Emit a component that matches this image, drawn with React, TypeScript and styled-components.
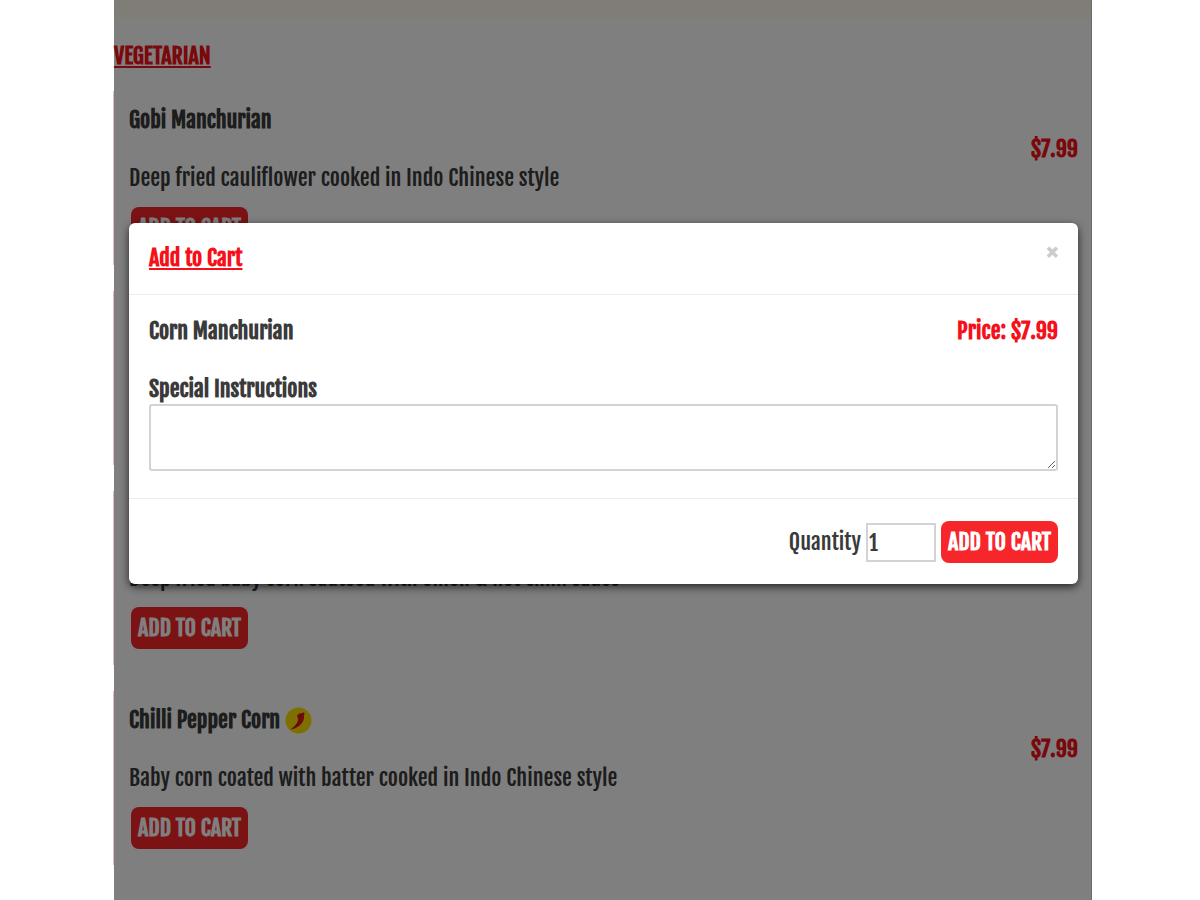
import React from "react";
import styled, { createGlobalStyle, css } from "styled-components";

const display = `"Fjalla One", "Roboto Condensed", "Liberation Sans Narrow", "Open Sans Condensed", "Liberation Sans", sans-serif`;

const GlobalStyle = createGlobalStyle`
  * { box-sizing: border-box; }
  body {
    margin: 0;
    background: #fff;
    color: #3a3a3a;
    font-family: ${display};
    font-size: 22px;
    line-height: 32px;
  }
  h2, h3, p { margin: 0; }
`;

const underlined = css`
  font-size: 22px;
  text-decoration: underline;
  text-decoration-thickness: 2px;
  text-underline-offset: 2px;
`;

const Page = styled.div`
  display: flex;
  padding: 0 108px 0 114px;
  min-height: 100vh;
`;

const Frame = styled.div`
  position: relative;
  flex: 1;
  background: linear-gradient(#fffbeb 0, #fffbeb 12px, #ffffff 24px);
  border-right: 1px solid #6c6c6c;
`;

const Menu = styled.main`
  padding-top: 40px;
`;

const Category = styled.h2`
  ${underlined}
  color: #f5101a;
  margin-bottom: 19px;
`;

const Item = styled.article`
  display: flex;
  justify-content: space-between;
  height: 174px;
  margin: 0 0 26px -1px;
  padding: 0 13px 0 15px;
  border-left: 1px solid #dcc0c3;
`;

const ItemBody = styled.div`
  display: flex;
  flex-direction: column;
  align-items: flex-start;
`;

const ItemName = styled.h3<{ $covered?: boolean }>`
  display: flex;
  align-items: center;
  gap: 5px;
  height: 58px;
  font-size: 22px;
  visibility: ${(p) => (p.$covered ? "hidden" : "visible")};
`;

const Description = styled.p`
  height: 58px;
  padding-top: 13px;
`;

const Price = styled.strong`
  color: #f5101a;
  font-kerning: none;
`;

const ItemPrice = styled(Price)<{ $covered?: boolean }>`
  padding-top: 42px;
  visibility: ${(p) => (p.$covered ? "hidden" : "visible")};
`;

const CartButton = styled.button`
  height: 42px;
  padding: 0 7px;
  border: 0;
  border-radius: 8px;
  background: #f7262b;
  color: #fff;
  font: bold 22px/40px ${display};
  text-transform: uppercase;
`;

const ListCartButton = styled(CartButton)`
  margin-left: 2px;
`;

const Backdrop = styled.div`
  position: absolute;
  inset: 0;
  background: rgba(0, 0, 0, 0.5);
`;

const Dialog = styled.section`
  position: absolute;
  top: 223px;
  left: 15px;
  right: 13px;
  background: #fff;
  border-radius: 6px;
  box-shadow: 0 3px 8px rgba(0, 0, 0, 0.7);
`;

const DialogHeader = styled.header`
  display: flex;
  justify-content: space-between;
  align-items: flex-start;
  height: 72px;
  padding: 19px 20px;
  border-bottom: 1px solid #ececec;
`;

const DialogTitle = styled.h2`
  ${underlined}
  color: #f5101a;
`;

const CloseButton = styled.button`
  padding: 0;
  border: 0;
  background: none;
  color: #ccc;
  font: bold 28px/22px ${display};
`;

const DialogBody = styled.div`
  padding: 20px 20px 27px;
  border-bottom: 1px solid #ececec;
`;

const Summary = styled.div`
  display: flex;
  justify-content: space-between;
  margin-bottom: 26px;
`;

const Field = styled.label`
  display: block;
  height: 31px;
  font-weight: bold;
`;

const Instructions = styled.textarea`
  display: block;
  width: 100%;
  height: 67px;
  border: 2px solid #d3d3d3;
  border-radius: 3px;
  background: #fff;
  font: 22px/32px ${display};
`;

const DialogFooter = styled.footer`
  display: flex;
  justify-content: flex-end;
  align-items: center;
  gap: 5px;
  padding: 22px 20px 21px;
`;

const Quantity = styled.label`
  display: flex;
  align-items: center;
  gap: 5px;
`;

const QuantityInput = styled.input`
  width: 70px;
  height: 39px;
  padding: 0 1px;
  border: 2px solid #d3d3d3;
  color: #3a3a3a;
  font: 22px/32px ${display};
`;

const Chilli = () => (
  <svg width="27" height="27" viewBox="0 0 28 28" role="img" aria-label="Spicy">
    <circle cx="14" cy="14" r="13.5" fill="#ffdc00" />
    <path d="M12.5 9.500C13 7 15.500 6 17.500 6.500L19.500 5.500L20.500 7L19.500 8.500C20.500 12 18.500 16 15.500 18.800C12.800 21.300 9.500 22.800 6 23C9.500 20.500 12.500 17.500 13.500 14C14 12 13 11 12.500 9.500Z" fill="#d8141c" />
  </svg>
);

type Dish = { name: string; text?: string; spicy?: boolean; covered?: boolean };

const dishes: Dish[] = [
  { name: "Gobi Manchurian", text: "Deep fried cauliflower cooked in Indo Chinese style" },
  { name: "Corn Manchurian", covered: true },
  { name: "Baby Corn", text: "Deep fried baby corn sauteed with onion & hot chilli sauce", covered: true },
  { name: "Chilli Pepper Corn", text: "Baby corn coated with batter cooked in Indo Chinese style", spicy: true },
];

export default function App() {
  return (
    <>
      <GlobalStyle />
      <Page>
        <Frame>
          <Menu>
            <Category>VEGETARIAN</Category>
            {dishes.map((d) => (
              <Item key={d.name}>
                <ItemBody>
                  <ItemName $covered={d.covered}>
                    {d.name}
                    {d.spicy && <Chilli />}
                  </ItemName>
                  {d.text && (
                    <>
                      <Description>{d.text}</Description>
                      <ListCartButton type="button">Add to cart</ListCartButton>
                    </>
                  )}
                </ItemBody>
                <ItemPrice $covered={d.covered}>$7.99</ItemPrice>
              </Item>
            ))}
          </Menu>
          <Backdrop />
          <Dialog role="dialog" aria-labelledby="dialog-title">
            <DialogHeader>
              <DialogTitle id="dialog-title">Add to Cart</DialogTitle>
              <CloseButton type="button" aria-label="Close">×</CloseButton>
            </DialogHeader>
            <DialogBody>
              <Summary>
                <strong>Corn Manchurian</strong>
                <Price>Price: $7.99</Price>
              </Summary>
              <Field htmlFor="instructions">Special Instructions</Field>
              <Instructions id="instructions" />
            </DialogBody>
            <DialogFooter>
              <Quantity>
                Quantity
                <QuantityInput type="text" defaultValue="1" />
              </Quantity>
              <CartButton type="button">Add to cart</CartButton>
            </DialogFooter>
          </Dialog>
        </Frame>
      </Page>
    </>
  );
}
